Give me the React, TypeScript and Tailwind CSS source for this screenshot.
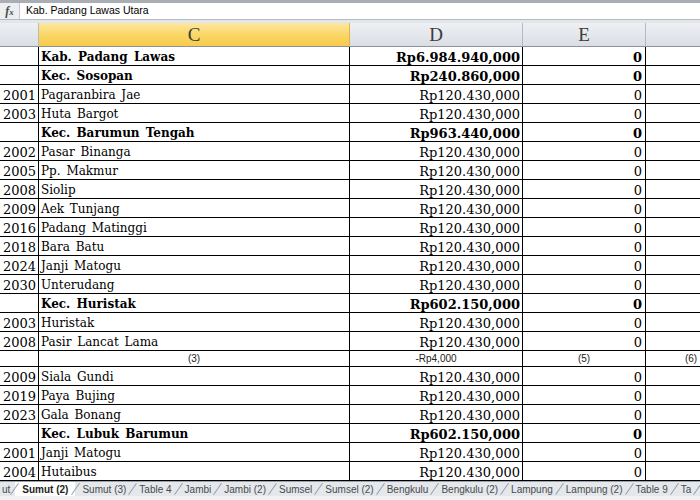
const rows: {
  code: string;
  name: string;
  amount: string;
  bold?: boolean;
  note?: boolean;
}[] = [
  { code: "", name: "Kab. Padang Lawas", amount: "Rp6.984.940,000", bold: true },
  { code: "", name: "Kec. Sosopan", amount: "Rp240.860,000", bold: true },
  { code: "2001", name: "Pagaranbira Jae", amount: "Rp120.430,000" },
  { code: "2003", name: "Huta Bargot", amount: "Rp120.430,000" },
  { code: "", name: "Kec. Barumun Tengah", amount: "Rp963.440,000", bold: true },
  { code: "2002", name: "Pasar Binanga", amount: "Rp120.430,000" },
  { code: "2005", name: "Pp. Makmur", amount: "Rp120.430,000" },
  { code: "2008", name: "Siolip", amount: "Rp120.430,000" },
  { code: "2009", name: "Aek Tunjang", amount: "Rp120.430,000" },
  { code: "2016", name: "Padang Matinggi", amount: "Rp120.430,000" },
  { code: "2018", name: "Bara Batu", amount: "Rp120.430,000" },
  { code: "2024", name: "Janji Matogu", amount: "Rp120.430,000" },
  { code: "2030", name: "Unterudang", amount: "Rp120.430,000" },
  { code: "", name: "Kec. Huristak", amount: "Rp602.150,000", bold: true },
  { code: "2003", name: "Huristak", amount: "Rp120.430,000" },
  { code: "2008", name: "Pasir Lancat Lama", amount: "Rp120.430,000" },
  { code: "", name: "(3)", amount: "-Rp4,000", note: true },
  { code: "2009", name: "Siala Gundi", amount: "Rp120.430,000" },
  { code: "2019", name: "Paya Bujing", amount: "Rp120.430,000" },
  { code: "2023", name: "Gala Bonang", amount: "Rp120.430,000" },
  { code: "", name: "Kec. Lubuk Barumun", amount: "Rp602.150,000", bold: true },
  { code: "2001", name: "Janji Matogu", amount: "Rp120.430,000" },
  { code: "2004", name: "Hutaibus", amount: "Rp120.430,000" },
  { code: "2005", name: "Sibual-buali", amount: "Rp120.430,000" },
];

const tabs = [
  "ut",
  "Sumut (2)",
  "Sumut (3)",
  "Table 4",
  "Jambi",
  "Jambi (2)",
  "Sumsel",
  "Sumsel (2)",
  "Bengkulu",
  "Bengkulu (2)",
  "Lampung",
  "Lampung (2)",
  "Table 9",
  "Ta",
];

function DataRow({ row }: { row: (typeof rows)[number] }) {
  if (row.note) {
    return (
      <div className="flex h-[16px] font-['Liberation_Sans',sans-serif] text-[10px] text-[#222]">
        <div className="w-[39px] shrink-0 border-r border-b border-black" />
        <div className="flex w-[311px] shrink-0 items-center justify-center border-r border-b border-black">
          {row.name}
        </div>
        <div className="flex w-[173px] shrink-0 items-center justify-center border-r border-b border-black">
          {row.amount}
        </div>
        <div className="flex w-[123px] shrink-0 items-center justify-center border-r border-b border-black">
          (5)
        </div>
        <div className="flex w-[90px] shrink-0 items-center justify-center border-b border-black">
          (6)
        </div>
      </div>
    );
  }
  const weight = row.bold ? "font-bold" : "font-normal";
  return (
    <div className="flex h-[19px] font-['DejaVu_Serif',serif] text-[13px] leading-none text-black">
      <div className="flex w-[39px] shrink-0 items-center justify-end overflow-hidden border-r border-b border-black pt-[2px] pr-[2px]">
        {row.code}
      </div>
      <div
        className={`flex w-[311px] shrink-0 items-center border-r border-b border-black pt-[2px] pl-[2px] text-[12px] [word-spacing:2px] ${weight}`}
      >
        {row.name}
      </div>
      <div
        className={`flex w-[173px] shrink-0 items-center justify-end border-r border-b border-black pt-[2px] pr-[2px] ${weight}`}
      >
        {row.amount}
      </div>
      <div
        className={`flex w-[123px] shrink-0 items-center justify-end border-r border-b border-black pt-[2px] pr-[3px] ${weight}`}
      >
        0
      </div>
      <div className="w-[90px] shrink-0 border-b border-black" />
    </div>
  );
}

export default function App() {
  return (
    <div className="relative flex h-[500px] w-[700px] flex-col overflow-hidden bg-white">
      {/* formula bar */}
      <div className="h-[3px] shrink-0 bg-[#a9aeb5]" />
      <div className="flex h-[17px] shrink-0 border-b border-[#b6bbc2]">
        <div className="flex w-[20px] shrink-0 items-center justify-center border-r border-[#c4c8ce] bg-[#eceef1] font-['Liberation_Serif',serif] text-[12px] font-bold italic leading-none text-[#4a4a4a]">
          f<span className="mt-[3px] text-[9px]">x</span>
        </div>
        <div className="flex flex-1 items-center pl-[6px] font-['Liberation_Sans',sans-serif] text-[10.5px] text-black">
          Kab. Padang Lawas Utara
        </div>
      </div>
      <div className="h-[3px] shrink-0 bg-[#e3e6ea]" />

      {/* column headers */}
      <div className="flex h-[24px] shrink-0 border-b border-[#8e949c] font-['Liberation_Serif',serif] text-[19px] leading-none text-[#3c3c3c]">
        <div className="w-[39px] shrink-0 border-r border-[#b4bac2] bg-gradient-to-b from-[#eef0f3] to-[#dadee4]" />
        <div className="flex w-[311px] shrink-0 items-center justify-center border-r border-[#e0b44a] bg-gradient-to-b from-[#fde7a0] via-[#fad766] to-[#f7cb4c]">
          C
        </div>
        <div className="flex w-[173px] shrink-0 items-center justify-center border-r border-[#b4bac2] bg-gradient-to-b from-[#eef0f3] to-[#dadee4]">
          D
        </div>
        <div className="flex w-[123px] shrink-0 items-center justify-center border-r border-[#b4bac2] bg-gradient-to-b from-[#eef0f3] to-[#dadee4]">
          E
        </div>
        <div className="w-[90px] shrink-0 bg-gradient-to-b from-[#eef0f3] to-[#dadee4]" />
      </div>

      {/* rows */}
      <div className="flex-1 overflow-hidden">
        {rows.map((row, i) => (
          <DataRow key={i} row={row} />
        ))}
      </div>

      {/* sheet tabs */}
      <div className="absolute bottom-0 left-0 right-0 flex h-[19px] flex-col overflow-hidden border-t border-[#9ca2aa] bg-[#f0f1f3]">
        <div className="flex h-[14px] items-center bg-[#e4e7eb] font-['Liberation_Sans',sans-serif] text-[10px] text-[#4a4a4a]">
          {tabs.map((tab, i) => (
            <div key={tab} className="flex h-full shrink-0 items-center">
              <div
                className={
                  i === 1
                    ? "flex h-full items-center bg-white px-[7px] font-bold text-[#222]"
                    : i === 0
                      ? "flex h-full items-center pl-[2px] pr-[4px]"
                      : "flex h-full items-center px-[6px]"
                }
              >
                {tab}
              </div>
              <div className="h-[14px] w-px rotate-[35deg] bg-[#9aa0a8]" />
            </div>
          ))}
        </div>
      </div>
    </div>
  );
}
